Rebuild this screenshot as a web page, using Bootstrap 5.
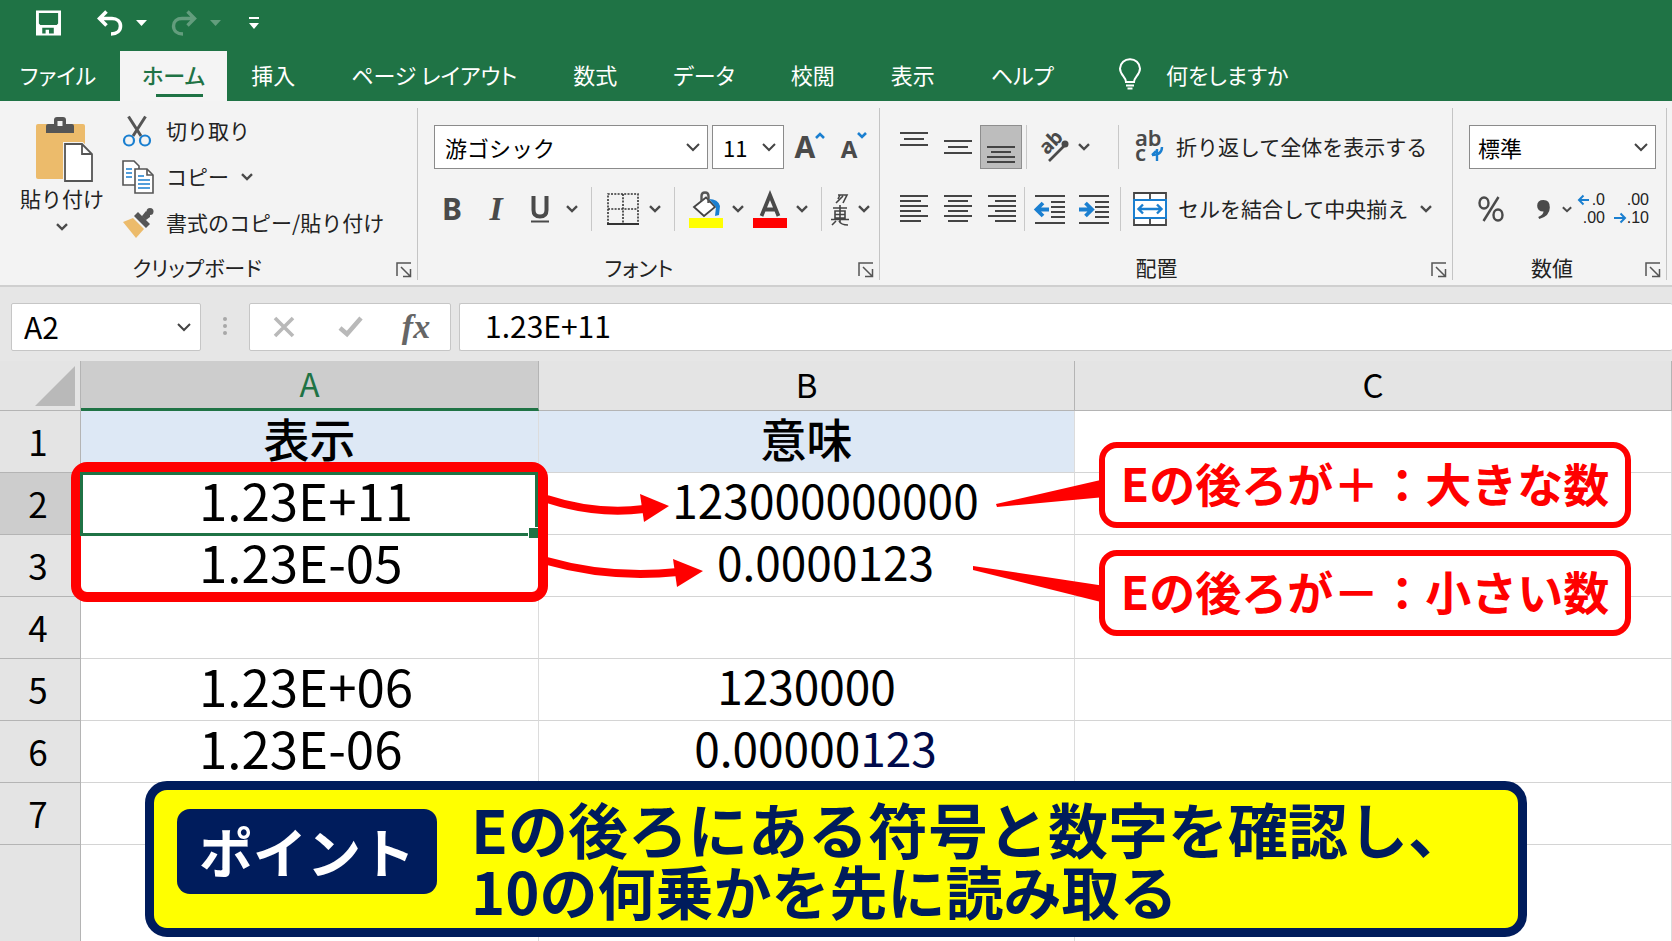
<!DOCTYPE html>
<html lang="ja">
<head>
<meta charset="utf-8">
<meta name="viewport" content="width=device-width, initial-scale=1">
<title>指数表示の読み方</title>
<link href="https://cdn.jsdelivr.net/npm/bootstrap@5.3.0/dist/css/bootstrap.min.css" rel="stylesheet">
<style>
:root { --xl-green:#1f7345; --ink:#222; --icon:#4a4a4a; --alert:#f00; --navy:#001c5c; }
body { font-family:"Noto Sans CJK JP","Noto Sans",sans-serif; color:var(--ink); background:#fff; overflow:hidden; }
button { color:inherit; }
svg { display:block; flex:none; overflow:visible; }
.palt { font-feature-settings:"palt"; }

/* title bar and tabs */
.app-head { background:var(--xl-green); }
.title-row { height:51px; padding:0 0 5px 36px; }
.title-row button, .tool, .chev { background:none; border:0; padding:0; }
.title-row .undo { margin-left:36px; }
.title-row .drop { margin-left:13px; }
.faded { opacity:.3; }
.menu-tabs { height:50px; font-size:22px; }
.menu-tabs .nav-link { color:#fff; height:50px; line-height:46px; padding:0 28px 4px; border-radius:0; white-space:nowrap; position:relative; }
.menu-tabs .first-tab { padding-left:20px; padding-right:24px; }
.menu-tabs .nav-link.active { background:#f4f4f4; color:var(--xl-green); font-weight:500; padding:0 22px 4px; }
.menu-tabs .nav-link.active::after { content:""; position:absolute; bottom:4px; left:36px; right:24px; height:3px; background:var(--xl-green); }
.menu-tabs .nav-link.after-active { padding-left:24px; }
.menu-tabs .nav-link.tell { padding-left:36px; }

/* ribbon */
.ribbon { background:#f3f3f3; height:186px; border-bottom:2px solid #cfcfcf; font-size:21px; }
.group { position:relative; padding-bottom:2px; }
.group::after { content:""; position:absolute; right:0; top:7px; bottom:5px; width:1px; background:#c4c4c4; }
.g-clip { width:418px; padding-top:7px; }
.g-font { width:462px; padding-top:24px; }
.g-align { flex:1 1 auto; padding-top:24px; }
.g-num { width:214px; padding-top:24px; margin-right:5px; }
.tool-row { height:44px; }
.tool-row.inset { padding-left:12px; }
.tool-row + .tool-row { margin-top:18px; }
.tool { width:44px; height:44px; display:flex; align-items:center; justify-content:center; flex:none; }
.tool.slim { width:28px; }
.chev { width:20px; height:44px; display:flex; align-items:center; justify-content:center; flex:none; }
.vsep { width:1px; height:44px; background:#c8c8c8; margin:0 9px; flex:none; }
.vsep.tight { margin:0 3px; }
.pressed { background:#bdbdbd; border:1px solid #8e8e8e; width:42px; }
.group-label { height:32px; line-height:32px; }
.group-label .chev { height:26px; align-self:flex-end; }
.clip-row { height:46px; background:none; border:0; padding:0; }
.clip-row svg { width:32px; margin-right:12px; }
.paste { width:88px; margin-left:18px; background:none; border:0; padding:9px 0 0; }
.combo { height:44px; border:1px solid #8b8b8b; border-radius:0; font-size:22px; line-height:30px; padding:0 34px 0 10px; color:#000; background-color:#fff; background-size:14px 9px; background-position:right 7px center;
  background-image:url("data:image/svg+xml,%3Csvg xmlns='http://www.w3.org/2000/svg' viewBox='0 0 14 9'%3E%3Cpath fill='none' stroke='%23444' stroke-width='2' d='M1 1l6 6 6-6'/%3E%3C/svg%3E"); }
.combo.face { width:274px; }
.combo.pt { width:72px; padding:0 24px 0 10px; }
.combo.fmt { width:187px; padding-left:8px; }
.letter { font-family:"Noto Sans","Noto Sans CJK JP",sans-serif; font-weight:700; color:var(--icon); font-size:30px; line-height:1; }
.letter.serif { font-family:"Liberation Serif",serif; font-style:italic; font-size:34px; }
.dec { font-family:"Liberation Sans",sans-serif; font-size:16px; line-height:18px; color:#222; }

/* formula bar */
.formula { background:#e6e6e6; height:74px; padding:16px 0 10px 11px; font-size:30px; }
.box { height:48px; background-color:#fff; border:1px solid #c6c6c6; border-radius:2px; }
.name-box { width:190px; font-size:30px; padding:0 34px 2px 12px; background-position:right 9px center; line-height:40px; flex:none; }
.dots { margin:14px 21px 0; }
.fx-box { width:202px; }
.formula input { color:#000; padding:0 0 4px 25px; outline:0; min-width:0; }
.fx { font-family:"Liberation Serif",serif; font-style:italic; font-weight:700; color:#666; font-size:34px; line-height:1; }

/* sheet */
.sheet { position:relative; }
.grid { width:100%; table-layout:fixed; border-collapse:separate; border-spacing:0; color:#000; }
.grid th, .grid td { padding:0; position:relative; border-right:1px solid #dcdcdc; border-bottom:1px solid #d4d4d4; line-height:1; vertical-align:middle; white-space:nowrap; }
.grid thead th { height:50px; background:#e4e4e4; font-weight:400; font-size:33px; text-align:center; border-color:#b4b4b4; padding-bottom:2px; }
.grid tbody th { background:#e4e4e4; font-weight:400; font-size:35px; text-align:center; border-color:#b4b4b4; padding:0 4px 2px 0; }
.grid tbody tr { height:62px; }
.grid tbody tr.tail { height:96px; }
.grid tbody tr.tail > * { border-bottom:0; }
.grid .c-row { width:81px; } .grid .c-a { width:458px; } .grid .c-b { width:536px; }
.grid thead th.on { background:#cdcdcd; color:var(--xl-green); border-bottom:3px solid var(--xl-green); }
.grid tbody th.on { background:#cdcdcd; }
.grid td.head { background:#dde8f5; font-weight:500; font-size:46px; text-align:center; padding-bottom:10px; }
.grid td.sci { font-size:51px; padding:0 0 8px 118px; }
.grid td.num { font-size:46px; text-align:center; padding-bottom:10px; }
.grid td.shift { padding-left:38px; }
.grid td.wide { padding-left:18px; }
.late { color:#000a4a; }
.corner { position:absolute; right:5px; bottom:4px; }

/* annotations over the sheet */
.cursor { position:absolute; inset:-1px 0 -2px -1px; border:3px solid var(--xl-green); z-index:2; }
.cursor::after { content:""; position:absolute; right:-3px; bottom:-5px; width:10px; height:11px; background:var(--xl-green); border:solid #fff; border-width:1px 0 0 1px; }
.red-frame { position:absolute; top:-11px; left:-10px; right:-10px; height:140px; border:10px solid var(--alert); border-radius:16px; z-index:1; }
.overlay { position:absolute; z-index:3; }
.arrow { left:7px; top:17px; }
.callout { position:absolute; left:24px; right:40px; height:86px; border:6px solid var(--alert); border-radius:18px; background:#fff; color:var(--alert); font-weight:700; font-size:46px; line-height:68px; text-align:center; z-index:3; }
.callout svg { position:absolute; right:100%; }
.callout.up { top:-31px; } .callout.down { top:15px; }
.callout.up svg { top:28px; } .callout.down svg { top:10px; }
.banner { position:absolute; left:145px; right:145px; bottom:4px; background:#ff0; border:9px solid var(--navy); border-radius:22px; padding:6px 0 6px 23px; z-index:4; color:var(--navy); }
.banner .tag { width:260px; height:85px; margin:13px 34px 0 0; background:var(--navy); color:#fff; border-radius:13px; font-size:54px; font-weight:700; line-height:84px; text-align:center; flex:none; }
.banner p { font-size:58px; font-weight:700; line-height:63px; margin:0; white-space:nowrap; }
.banner p.lead-line { font-size:60px; }
</style>
</head>
<body>
<svg width="0" height="0" class="position-absolute" aria-hidden="true">
  <symbol id="chev" viewBox="0 0 12 8"><path d="M1 1.2l5 4.8 5-4.8" fill="none" stroke="#4a4a4a" stroke-width="2.4"/></symbol>
  <symbol id="launch" viewBox="0 0 16 16"><path d="M1 14V1h14M5 5l9 9M14.500 7v7.500H7" fill="none" stroke="#555" stroke-width="1.500"/></symbol>
  <symbol id="curl" viewBox="0 0 26 26"><path d="M9.500 1.500L2.500 8.500l7 7M3 8.500h12c5 0 8.500 3 8.500 7.500S20 24 14 24" fill="none" stroke="currentColor" stroke-width="3.600"/></symbol>
</svg>

<header class="app-head text-white">
  <div class="title-row d-flex align-items-center">
    <button type="button" aria-label="保存"><svg width="25" height="26" viewBox="0 0 26 26"><path fill="#fff" fill-rule="evenodd" d="M0 0h26v26H0zM3 2.500v11l1.500 1.500h17l1.500-1.500v-11zM6.500 18v6H10v-4h3.500v4h5v-6z"/></svg></button>
    <button type="button" aria-label="元に戻す" class="undo"><svg width="26" height="26"><use href="#curl"/></svg></button>
    <button type="button" aria-label="元に戻すの履歴" class="drop"><svg width="11" height="6"><path fill="#fff" d="M0 0h11L5.500 6z"/></svg></button>
    <button type="button" aria-label="やり直し" class="ms-4 faded"><svg width="26" height="26" viewBox="0 0 26 26"><g transform="translate(26 0) scale(-1 1)"><path d="M9.500 1.500L2.500 8.500l7 7M3 8.500h12c5 0 8.500 3 8.500 7.500S20 24 14 24" fill="none" stroke="#fff" stroke-width="3.400"/></g></svg></button>
    <button type="button" aria-label="やり直しの履歴" class="drop faded"><svg width="11" height="6"><path fill="#fff" d="M0 0h11L5.500 6z"/></svg></button>
    <button type="button" aria-label="クイック アクセス" class="ms-4 ps-1"><svg width="10" height="12"><path fill="#fff" d="M0 0h10v2H0zM0 6h10L5 12z"/></svg></button>
  </div>
  <nav class="menu-tabs nav flex-nowrap palt">
    <a class="nav-link first-tab" href="#">ファイル</a>
    <a class="nav-link active" href="#" aria-current="page">ホーム</a>
    <a class="nav-link after-active" href="#">挿入</a>
    <a class="nav-link" href="#">ページ レイアウト</a>
    <a class="nav-link" href="#">数式</a>
    <a class="nav-link" href="#">データ</a>
    <a class="nav-link" href="#">校閲</a>
    <a class="nav-link" href="#">表示</a>
    <a class="nav-link" href="#">ヘルプ</a>
    <a class="nav-link tell d-flex align-items-center" href="#"><svg class="me-4" width="24" height="32" viewBox="0 0 24 32" fill="none" stroke="#fff" stroke-width="2"><path d="M8 24c0-5-6-7-6-13.500A9.800 9.800 0 0 1 12 1.200a9.800 9.800 0 0 1 10 9.300C22 17 16 19 16 24zM8 27.500h8M9.500 30.500h5"/></svg>何をしますか</a>
  </nav>
</header>

<section class="ribbon d-flex palt">
  <div class="group g-clip d-flex flex-column">
    <div class="d-flex">
      <button type="button" class="paste d-flex flex-column align-items-center">
        <svg class="ms-1" width="58" height="66" viewBox="0 0 58 66"><rect x="1" y="7" width="49" height="55" rx="2" fill="#ecbb6b"/><path fill="#555" d="M11 16V9q0-2 2-2h6V3q0-3 3-3h6q3 0 3 3v4h6q2 0 2 2v7z"/><rect x="22.500" y="4" width="5" height="5" fill="#f3f3f3"/><path d="M30 27h17l10 10v27H30z" fill="#fff" stroke="#f3f3f3" stroke-width="4"/><path d="M30 27h17l10 10v27H30zM47 27v10h10" fill="#fff" stroke="#555" stroke-width="1.800"/></svg>
        <span class="mb-2">貼り付け</span>
        <svg width="12" height="8"><use href="#chev"/></svg>
      </button>
      <div class="ms-3 d-flex flex-column">
        <button type="button" class="clip-row d-flex align-items-center"><svg height="32" viewBox="0 0 32 32" fill="none"><path d="M6.500 1.500L19 21M23.500 1.500L11 21" stroke="#555" stroke-width="3"/><circle cx="7" cy="25.500" r="5" stroke="#1a7fd0" stroke-width="2.200"/><circle cx="23" cy="25.500" r="5" stroke="#1a7fd0" stroke-width="2.200"/></svg>切り取り</button>
        <div class="d-flex align-items-center"><button type="button" class="clip-row d-flex align-items-center"><svg height="34" viewBox="0 0 32 34" stroke="#555" stroke-width="1.600"><path d="M1 1h11l5 5v19H1z" fill="#fff"/><path d="M13 9h12l6 6v18H13z" fill="#fff"/><path d="M25 9v6h6" fill="none"/><path d="M4 9h6M4 13h6M4 17h6M16 16h6M16 20h12M16 24h12M16 28h12" stroke="#1a7fd0" stroke-width="1.600"/></svg>コピー</button>
        <button type="button" class="chev ms-2" aria-label="コピーのオプション"><svg width="12" height="8"><use href="#chev"/></svg></button></div>
        <button type="button" class="clip-row d-flex align-items-center"><svg height="30" viewBox="0 0 32 30"><path fill="#ecbb6b" d="M1 14l10-4 11 11-8 9z"/><path fill="#555" d="M12 8l4-4 12 12-4 4zM20 8l4-5 4 3 0 3-4 3z"/><circle cx="28" cy="3.500" r="3.500" fill="#555"/></svg>書式のコピー/貼り付け</button>
      </div>
    </div>
    <div class="group-label d-flex align-items-center mt-auto"><span class="flex-grow-1 text-center">クリップボード</span><button type="button" class="chev me-1" aria-label="クリップボードの詳細"><svg width="16" height="16"><use href="#launch"/></svg></button></div>
  </div>

  <div class="group g-font d-flex flex-column">
    <div class="tool-row d-flex align-items-center ps-3">
      <select class="form-select combo face" aria-label="フォント名"><option>游ゴシック</option></select>
      <select class="form-select combo pt ms-1" aria-label="サイズ"><option>11</option></select>
      <button type="button" class="tool ms-1" aria-label="拡大"><span class="letter">A</span><svg class="mb-4" width="10" height="7"><path d="M1 6l4-4 4 4" fill="none" stroke="#1a7fd0" stroke-width="2.600"/></svg></button>
      <button type="button" class="tool" aria-label="縮小"><span class="letter fs-4 pt-1">A</span><svg class="mb-4" width="10" height="7"><path d="M1 1l4 4 4-4" fill="none" stroke="#1a7fd0" stroke-width="2.600"/></svg></button>
    </div>
    <div class="tool-row inset d-flex align-items-center">
      <button type="button" class="tool" aria-label="太字"><span class="letter">B</span></button>
      <button type="button" class="tool" aria-label="斜体"><span class="letter serif">I</span></button>
      <button type="button" class="tool" aria-label="下線"><svg width="18" height="27" viewBox="0 0 18 27" fill="none" stroke="#4a4a4a"><path d="M2.500 0v14q0 6.500 6.500 6.500t6.500-6.500V0" stroke-width="4"/><path d="M0 25.500h18" stroke-width="2"/></svg></button>
      <button type="button" class="chev" aria-label="下線の種類"><svg width="12" height="8"><use href="#chev"/></svg></button>
      <span class="vsep"></span>
      <button type="button" class="tool" aria-label="罫線"><svg width="32" height="32" viewBox="0 0 32 32" fill="none" stroke="#333"><path d="M1 31V1h30v30M16 1v30M1 16h30" stroke-width="1.600" stroke-dasharray="2 1.300"/><path d="M0 31h32" stroke-width="2"/></svg></button>
      <button type="button" class="chev" aria-label="罫線の種類"><svg width="12" height="8"><use href="#chev"/></svg></button>
      <span class="vsep"></span>
      <button type="button" class="tool" aria-label="塗りつぶし"><svg width="34" height="37" viewBox="0 0 34 37"><path d="M5 16L17 6.500 26 16 15 25z" fill="#fff" stroke="#444" stroke-width="1.800"/><path d="M12.500 10V5q0-3.500 3.500-3.500T19.500 5v7" fill="none" stroke="#555" stroke-width="2.400"/><path fill="#1a7fd0" d="M20 8q9 0 11 7l-1 9-4 1 1-9z"/><path fill="#ff0" d="M0 27h34v10H0z"/></svg></button>
      <button type="button" class="chev" aria-label="塗りつぶしの色"><svg width="12" height="8"><use href="#chev"/></svg></button>
      <button type="button" class="tool" aria-label="フォントの色"><svg width="34" height="37" viewBox="0 0 34 37"><path d="M8.500 25L17 4l8.500 21M11.500 18.500h11" fill="none" stroke="#4a4a4a" stroke-width="3.800"/><path fill="#f00" d="M0 27h34v10H0z"/></svg></button>
      <button type="button" class="chev" aria-label="フォントの色の選択"><svg width="12" height="8"><use href="#chev"/></svg></button>
      <span class="vsep me-1"></span>
      <button type="button" class="tool slim" aria-label="ふりがな"><svg width="18" height="34" viewBox="0 0 18 34" fill="none" stroke="#444" stroke-width="1.600"><path d="M7 3h9L12 11M9 3L7 7M12 4L5 11M2 16h14M9 13v17M4 19h10v7H4zM4 22.500h10M0 27.500h18M5 29l-4 4M8 29q2 4 9 4"/></svg></button>
      <button type="button" class="chev" aria-label="ふりがなの設定"><svg width="12" height="8"><use href="#chev"/></svg></button>
    </div>
    <div class="group-label d-flex align-items-center mt-auto"><span class="flex-grow-1 text-center ps-1">フォント</span><button type="button" class="chev me-1" aria-label="フォントの詳細"><svg width="16" height="16"><use href="#launch"/></svg></button></div>
  </div>

  <div class="group g-align d-flex flex-column">
    <div class="tool-row inset d-flex align-items-center">
      <button type="button" class="tool" aria-label="上揃え"><svg class="mb-3" width="28" height="14" stroke="#444" stroke-width="1.800"><path d="M0 1h28M4 7h20M0 13h28"/></svg></button>
      <button type="button" class="tool" aria-label="上下中央揃え"><svg width="28" height="14" stroke="#444" stroke-width="1.800"><path d="M0 1h28M4 7h20M0 13h28"/></svg></button>
      <button type="button" class="tool pressed" aria-label="下揃え" aria-pressed="true"><svg class="mt-3" width="28" height="18" stroke="#444" stroke-width="1.800"><path d="M0 1h28M4 6h20M0 11h28M0 16h28"/></svg></button>
      <span class="vsep tight ms-1"></span>
      <button type="button" class="tool" aria-label="方向"><svg width="32" height="32" viewBox="0 0 32 32" fill="none" stroke="#4a4a4a" stroke-width="2.600"><text x="-11" y="6" transform="translate(13 14) rotate(-45) translate(2 0)" fill="#4a4a4a" stroke="none" font-size="20" font-weight="700" font-family="Noto Sans, sans-serif">ab</text><path d="M13 30L29 14"/><circle cx="29" cy="13" r="3.500" fill="#4a4a4a" stroke="none"/></svg></button>
      <button type="button" class="chev" aria-label="方向の選択"><svg width="12" height="8"><use href="#chev"/></svg></button>
      <span class="vsep ms-4"></span>
      <button type="button" class="d-flex align-items-center bg-transparent border-0 p-0 text-nowrap"><svg class="me-2" width="40" height="36" viewBox="0 0 40 36"><g font-family="Noto Sans, sans-serif" font-size="22" font-weight="600" fill="#4a4a4a"><text x="7" y="17">ab</text><text x="7" y="32">c</text></g><path d="M34 18q0 8-10 8M29 20v12M24 26l4-4" fill="none" stroke="#1a7fd0" stroke-width="2.400"/></svg>折り返して全体を表示する</button>
    </div>
    <div class="tool-row inset d-flex align-items-center">
      <button type="button" class="tool" aria-label="左揃え"><svg width="28" height="28" stroke="#444" stroke-width="1.800"><path d="M0 1h28M0 6h21M0 11h28M0 16h21M0 21h28M0 26h21"/></svg></button>
      <button type="button" class="tool" aria-label="中央揃え"><svg width="28" height="28" stroke="#444" stroke-width="1.800"><path d="M0 1h28M4 6h20M0 11h28M4 16h20M0 21h28M4 26h20"/></svg></button>
      <button type="button" class="tool" aria-label="右揃え"><svg width="28" height="28" stroke="#444" stroke-width="1.800"><path d="M0 1h28M7 6h21M0 11h28M7 16h21M0 21h28M7 26h21"/></svg></button>
      <span class="vsep tight ms-0"></span>
      <button type="button" class="tool" aria-label="インデントを減らす"><svg width="30" height="29" stroke="#444" stroke-width="1.800"><path d="M0 1h30M16 7h14M16 12h14M16 17h14M16 22h14M0 28h30"/><path d="M14 14.500H3M8 8l-6.500 6.500L8 21" fill="none" stroke="#1a7fd0" stroke-width="3.800"/></svg></button>
      <button type="button" class="tool" aria-label="インデントを増やす"><svg width="30" height="29" stroke="#444" stroke-width="1.800"><path d="M0 1h30M16 7h14M16 12h14M16 17h14M16 22h14M0 28h30"/><path d="M0 14.500h11M6.500 8l6.500 6.500L6.500 21" fill="none" stroke="#1a7fd0" stroke-width="3.800"/></svg></button>
      <span class="vsep ms-1"></span>
      <button type="button" class="d-flex align-items-center bg-transparent border-0 p-0 text-nowrap"><svg class="me-2" width="40" height="36" viewBox="0 0 40 36" fill="none"><path d="M4 2h32v32H4zM20 2v6M20 28v6" stroke="#444" stroke-width="1.800" fill="#fff"/><path d="M4 9h32v18H4z" fill="#fff" stroke="#1a7fd0" stroke-width="2"/><path d="M9 18h22M13 13.500L8.500 18l4.500 4.500M27 13.500l4.500 4.500-4.500 4.500" stroke="#1a7fd0" stroke-width="2.400"/></svg>セルを結合して中央揃え</button>
      <button type="button" class="chev ms-2" aria-label="結合の種類"><svg width="12" height="8"><use href="#chev"/></svg></button>
    </div>
    <div class="group-label d-flex align-items-center mt-auto"><span class="flex-grow-1 text-center ps-1">配置</span><button type="button" class="chev me-1" aria-label="配置の詳細"><svg width="16" height="16"><use href="#launch"/></svg></button></div>
  </div>

  <div class="group g-num d-flex flex-column">
    <div class="tool-row ps-3"><select class="form-select combo fmt" aria-label="表示形式"><option>標準</option></select></div>
    <div class="tool-row d-flex align-items-center ps-3">
      <button type="button" class="tool" aria-label="パーセント"><svg width="26" height="26" viewBox="0 0 26 26" fill="none" stroke="#4a4a4a" stroke-width="2.400"><ellipse cx="6" cy="7" rx="4.500" ry="5.500"/><ellipse cx="20" cy="19" rx="4.500" ry="5.500"/><path d="M20.500 1L5.500 25"/></svg></button>
      <button type="button" class="tool slim ms-3" aria-label="桁区切り"><svg width="13" height="19" viewBox="0 0 12 18"><path fill="#4a4a4a" d="M6 0q6 0 6 7 0 8-10 11l-1-2q5-2 5-5-6 0-6-5.500Q0 0 6 0z"/></svg></button>
      <button type="button" class="chev" aria-label="通貨"><svg width="10" height="7"><use href="#chev"/></svg></button>
      <button type="button" class="tool slim flex-column align-items-stretch dec" aria-label="小数点以下の表示桁数を増やす"><span class="d-flex align-items-center justify-content-between"><svg width="12" height="12" viewBox="0 0 12 12"><path d="M12 6H2M6.500 1.500L2 6l4.500 4.500" fill="none" stroke="#1a7fd0" stroke-width="2"/></svg>.0</span><span class="text-end">.00</span></button>
      <button type="button" class="tool slim ms-3 flex-column align-items-stretch dec" aria-label="小数点以下の表示桁数を減らす"><span class="text-end">.00</span><span class="d-flex align-items-center justify-content-end"><svg width="10" height="12" viewBox="0 0 10 12"><path d="M-3 6H7M3.500 1.500L8 6l-4.500 4.500" fill="none" stroke="#1a7fd0" stroke-width="2"/></svg>.10</span></button>
    </div>
    <div class="group-label d-flex align-items-center mt-auto"><span class="flex-grow-1 text-center ps-2">数値</span><button type="button" class="chev me-1" aria-label="数値の詳細"><svg width="16" height="16"><use href="#launch"/></svg></button></div>
  </div>
</section>

<section class="formula d-flex">
  <select class="form-select combo box name-box" aria-label="名前ボックス"><option>A2</option></select>
  <svg class="dots" width="6" height="18" fill="#a8a8a8"><circle cx="3" cy="2" r="2"/><circle cx="3" cy="9" r="2"/><circle cx="3" cy="16" r="2"/></svg>
  <div class="box fx-box d-flex align-items-center justify-content-between px-4 flex-shrink-0">
    <button type="button" class="chev" aria-label="キャンセル"><svg width="22" height="20" fill="none" stroke="#b9b9b9" stroke-width="3.600"><path d="M2 1l18 18M20 1L2 19"/></svg></button>
    <button type="button" class="chev" aria-label="入力"><svg width="25" height="20" fill="none" stroke="#b9b9b9" stroke-width="4.500"><path d="M2 11l7 6L23 1"/></svg></button>
    <button type="button" class="chev fx" aria-label="関数の挿入">fx</button>
  </div>
  <input class="box ms-2 flex-grow-1 border-end-0" type="text" value="1.23E+11" aria-label="数式バー">
</section>

<main class="sheet">
  <table class="grid">
    <colgroup><col class="c-row"><col class="c-a"><col class="c-b"><col></colgroup>
    <thead>
      <tr><th><svg class="corner" width="40" height="40"><path fill="#b9b9b9" d="M40 0v40H0z"/></svg></th><th class="on">A</th><th>B</th><th>C</th></tr>
    </thead>
    <tbody>
      <tr><th>1</th><td class="head">表示</td><td class="head">意味</td><td></td></tr>
      <tr><th class="on">2</th><td class="sci">1.23E+11<span class="red-frame"></span><span class="cursor"></span></td>
        <td class="num shift">123000000000
          <svg class="overlay arrow" width="124" height="36" viewBox="0 0 124 36"><path d="M1 9Q50 25 98 19" fill="none" stroke="#f00" stroke-width="8"/><path fill="#f00" d="M94 4l29 12-25 16z"/></svg></td>
        <td><div class="callout up">Eの後ろが＋：大きな数<svg width="110" height="30" viewBox="0 0 110 30"><path fill="#f00" d="M110 3v18L2 31l-1-3z"/></svg></div></td></tr>
      <tr><th>3</th><td class="sci">1.23E-05</td>
        <td class="num shift">0.0000123
          <svg class="overlay arrow" width="160" height="38" viewBox="0 0 160 38"><path d="M1 9Q64 27 132 20" fill="none" stroke="#f00" stroke-width="8"/><path fill="#f00" d="M127 7l30 12-26 16z"/></svg></td>
        <td><div class="callout down">Eの後ろが－：小さい数<svg width="134" height="44" viewBox="0 0 134 44"><path fill="#f00" d="M134 20v17L2 4V0z"/></svg></div></td></tr>
      <tr><th>4</th><td></td><td></td><td></td></tr>
      <tr><th>5</th><td class="sci">1.23E+06</td><td class="num">1230000</td><td></td></tr>
      <tr><th>6</th><td class="sci">1.23E-06</td><td class="num wide">0.00000<span class="late">123</span></td><td></td></tr>
      <tr><th>7</th><td></td><td></td><td></td></tr>
      <tr class="tail"><th></th><td></td><td></td><td></td></tr>
    </tbody>
  </table>
  <aside class="banner d-flex align-items-start">
    <strong class="tag">ポイント</strong>
    <div>
      <p class="lead-line">Eの後ろにある符号と数字を確認し、</p>
      <p>10の何乗かを先に読み取る</p>
    </div>
  </aside>
</main>
<script src="https://cdn.jsdelivr.net/npm/bootstrap@5.3.0/dist/js/bootstrap.bundle.min.js"></script>
</body>
</html>
